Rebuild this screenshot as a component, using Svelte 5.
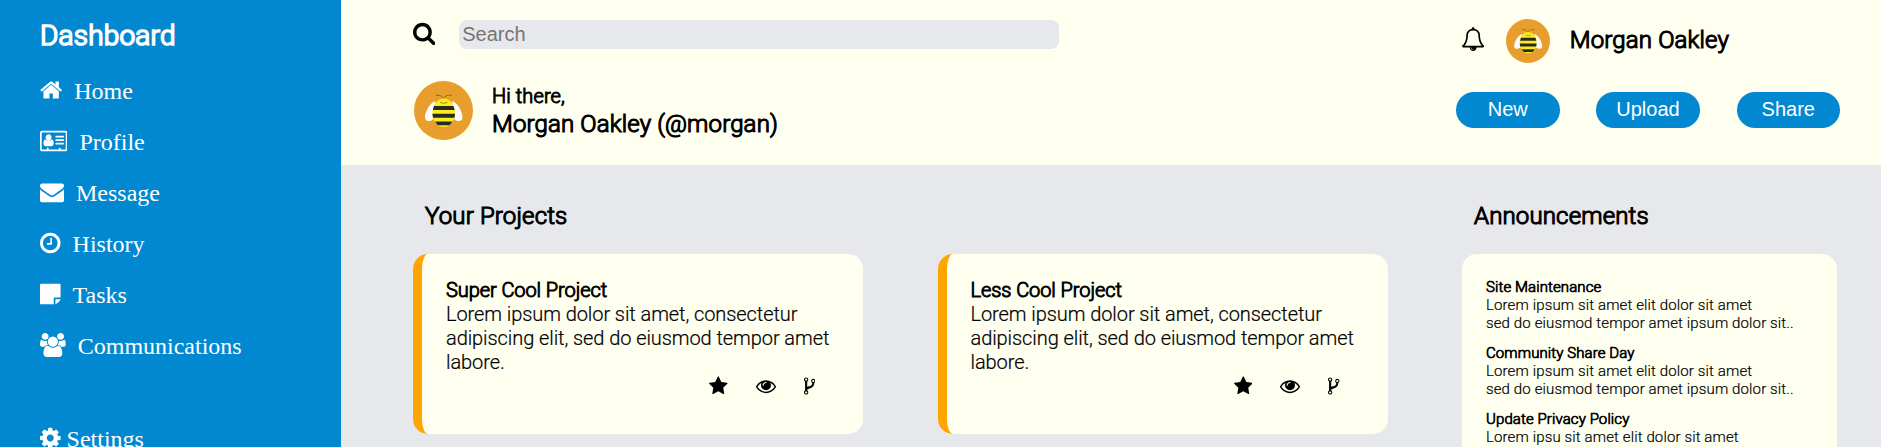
<script>
  const icons = {
    home: { box: '64 0 1664 1792', d: 'M1472 992v480q0 26-19 45t-45 19h-384v-384h-256v384h-384q-26 0-45-19t-19-45v-480q0-1 .5-3t.5-3l575-474 575 474q1 2 1 6zm223-69l-62 74q-8 9-21 11h-3q-13 0-21-7l-692-577-692 577q-12 8-24 7-13-2-21-11l-62-74q-8-10-7-23.5t11-21.5l719-599q32-26 76-26t76 26l244 204v-195q0-14 9-23t23-9h192q14 0 23 9t9 23v408l219 182q10 8 11 21.5t-7 23.5z' },
    card: { box: '0 0 2048 1792', d: 'M160 128h1728q66 0 113 47t47 113v1216q0 66-47 113t-113 47h-1728q-66 0-113-47t-47-113v-1216q0-66 47-113t113-47zM160 256q-32 0-32 32v1216q0 32 32 32h352v-96q0-14 9-23t23-9h64q14 0 23 9t9 23v96h768v-96q0-14 9-23t23-9h64q14 0 23 9t9 23v96h352q32 0 32-32v-1216q0-32-32-32zM867 625q0 94-66 160.500t-160 66.500-160-66.500-66-160.500 66-160 160-66 160 66 66 160zM1024 1035q0 104-44 174t-132 70h-416q-88 0-132-70t-44-174q0-110 37-185t128-75q94 88 219 88t219-88q91 0 128 75t37 185zM1184 512h576q32 0 32 32v64q0 32-32 32h-576q-32 0-32-32v-64q0-32 32-32zM1184 768h576q32 0 32 32v64q0 32-32 32h-576q-32 0-32-32v-64q0-32 32-32zM1184 1024h576q32 0 32 32v64q0 32-32 32h-576q-32 0-32-32v-64q0-32 32-32z' },
    envelope: { box: '0 0 1792 1792', d: 'M1792 710v794q0 66-47 113t-113 47h-1472q-66 0-113-47t-47-113v-794q44 49 101 87 362 246 497 345 57 42 92.5 65.5t94.5 48 110 24.5h2q51 0 110-24.5t94.5-48 92.5-65.5q170-123 498-345 57-39 100-87zm0-294q0 79-49 151t-122 123q-376 261-468 325-10 7-42.5 31t-54 38.5-52 32.5-57.5 27-50 9h-2q-23 0-50-9t-57.5-27-52-32.5-54-38.5-42.5-31q-91-64-262-182.5t-205-142.5q-62-42-117-115.5t-55-136.5q0-78 41.5-130t118.5-52h1472q65 0 112.5 47t47.5 113z' },
    clock: { box: '128 0 1536 1792', d: 'M1024 544v448q0 14-9 23t-23 9h-320q-14 0-23-9t-9-23v-64q0-14 9-23t23-9h224v-352q0-14 9-23t23-9h64q14 0 23 9t9 23zm416 352q0-148-73-273t-198-198-273-73-273 73-198 198-73 273 73 273 198 198 273 73 273-73 198-198 73-273zm224 0q0 209-103 385.5t-279.5 279.5-385.5 103-385.5-103-279.5-279.5-103-385.5 103-385.5 279.5-279.5 385.5-103 385.5 103 279.5 279.5 103 385.5z' },
    note: { box: '128 0 1536 1792', d: 'M1152 1248v416h-928q-40 0-68-28t-28-68v-1344q0-40 28-68t68-28h1344q40 0 68 28t28 68v928h-416q-40 0-68 28t-28 68zm128 32h381q-15 82-65 132l-184 184q-50 50-132 65z' },
    group: { box: '0 0 1920 1792', d: 'M593 896q-162 5-265 128h-134q-82 0-138-40.5t-56-118.5q0-353 124-353 6 0 43.5 21t97.5 42.5 119 21.5q67 0 133-23-5 37-5 66 0 139 81 256zm1071 637q0 120-73 189.5t-194 69.5h-874q-121 0-194-69.5t-73-189.5q0-53 3.5-103.5t14-109 26.5-108.5 43-97.5 62-81 85.5-53.5 111.5-20q10 0 43 21.5t73 48 107 48 135 21.5 135-21.5 107-48 73-48 43-21.5q61 0 111.5 20t85.5 53.5 62 81 43 97.5 26.5 108.5 14 109 3.5 103.5zm-1024-1277q0 106-75 181t-181 75-181-75-75-181 75-181 181-75 181 75 75 181zm704 384q0 159-112.5 271.5t-271.5 112.5-271.5-112.5-112.5-271.5 112.5-271.5 271.5-112.5 271.5 112.5 112.5 271.5zm576 225q0 78-56 118.5t-138 40.5h-134q-103-123-265-128 81-117 81-256 0-29-5-66 66 23 133 23 59 0 119-21.5t97.5-42.5 43.5-21q124 0 124 353zm-128-609q0 106-75 181t-181 75-181-75-75-181 75-181 181-75 181 75 75 181z' },
    cog: { box: '128 0 1536 1792', d: 'M1152 896q0-106-75-181t-181-75-181 75-75 181 75 181 181 75 181-75 75-181zm512-109v222q0 12-8 23t-20 13l-185 28q-19 54-39 91 35 50 107 138 10 12 10 25t-9 23q-27 37-99 108t-94 71q-12 0-26-9l-138-108q-44 23-91 38-16 136-29 186-7 28-36 28h-222q-14 0-24.5-8.5t-11.5-21.5l-28-184q-49-16-90-37l-141 107q-10 9-25 9-14 0-25-11-126-114-165-168-7-10-7-23 0-12 8-23 15-21 51-66.5t54-70.5q-27-50-41-99l-183-27q-13-2-21-12.5t-8-23.5v-222q0-12 8-23t19-13l186-28q14-46 39-92-40-57-107-138-10-12-10-24 0-10 9-23 26-36 98.5-107.5t94.5-71.5q13 0 26 10l138 107q44-23 91-38 16-136 29-186 7-28 36-28h222q14 0 24.5 8.5t11.5 21.5l28 184q49 16 90 37l142-107q9-9 24-9 13 0 25 10 129 119 165 170 7 8 7 22 0 12-8 23-15 21-51 66.5t-54 70.5q26 50 41 98l183 28q13 2 21 12.5t8 23.5z' },
    search: { box: '64 0 1664 1792', d: 'M1216 832q0-185-131.5-316.5t-316.5-131.5-316.5 131.5-131.5 316.5 131.5 316.5 316.5 131.5 316.5-131.5 131.5-316.5zm512 832q0 52-38 90t-90 38q-54 0-90-38l-343-342q-179 124-399 124-143 0-273.5-55.5t-225-150-150-225-55.5-273.5 55.5-273.5 150-225 225-150 273.5-55.5 273.5 55.5 225 150 150 225 55.5 273.5q0 220-124 399l343 343q37 37 37 90z' },
    bell: { box: '64 0 1664 1792', d: 'M912 1696q0-16-16-16-59 0-101.5-42.5t-42.5-101.5q0-16-16-16t-16 16q0 73 51.5 124.5t124.5 51.5q16 0 16-16zm-666-288h1300q-266-300-266-832 0-51-24-105t-69-103-121.5-80.5-169.5-31.5-169.5 31.5-121.5 80.5-69 103-24 105q0 532-266 832zm1482 0q0 52-38 90t-90 38h-448q0 106-75 181t-181 75-181-75-75-181h-448q-52 0-90-38t-38-90q50-42 91-88t85-119.5 74.5-158.5 50-206 19.5-260q0-152 117-282.5t307-158.500q-8-19-8-39 0-40 28-68t68-28 68 28 28 68q0 20-8 39 190 28 307 158.5t117 282.5q0 139 19.5 260t50 206 74.5 158.5 85 119.5 91 88z' },
    star: { box: '64 0 1664 1792', d: 'M1728 647q0 22-26 48l-363 354 86 500q1 7 1 20 0 21-10.5 35.5t-30.5 14.5q-19 0-40-12l-449-236-449 236q-22 12-40 12-21 0-31.5-14.5t-10.5-35.5q0-6 2-20l86-500-364-354q-25-27-25-48 0-37 56-46l502-73 225-455q19-41 49-41t49 41l225 455 502 73q56 9 56 46z' },
    eye: { box: '0 0 1792 1792', d: 'M1664 960q-152-236-381-353 61 104 61 225 0 185-131.5 316.5t-316.5 131.5-316.5-131.5-131.5-316.5q0-121 61-225-229 117-381 353 133 205 333.5 326.5t434.5 121.5 434.5-121.5 333.5-326.5zm-720-384q0-20-14-34t-34-14q-125 0-214.5 89.5t-89.5 214.5q0 20 14 34t34 14 34-14 14-34q0-86 61-147t147-61q20 0 34-14t14-34zm848 384q0 34-20 69-140 230-376.5 368.5t-499.5 138.5-499.5-139-376.5-368q-20-35-20-69t20-69q140-229 376.5-368t499.5-139 499.5 139 376.5 368q20 35 20 69z' },
    fork: { box: '384 0 1024 1792', d: 'M672 1472q0-40-28-68t-68-28-68 28-28 68 28 68 68 28 68-28 28-68zm0-1152q0-40-28-68t-68-28-68 28-28 68 28 68 68 28 68-28 28-68zm640 128q0-40-28-68t-68-28-68 28-28 68 28 68 68 28 68-28 28-68zm96 0q0 52-26 96.5t-70 69.5q-2 287-226 414-67 38-203 81-128 40-169.5 71t-41.5 100v26q44 25 70 69.5t26 96.5q0 80-56 136t-136 56-136-56-56-136q0-52 26-96.5t70-69.5v-820q-44-25-70-69.5t-26-96.5q0-80 56-136t136-56 136 56 56 136q0 52-26 96.5t-70 69.5v497q54-26 154-57 55-17 87.5-29.5t70.5-31 59-39.5 40.5-51 28-69.5 8.5-91.5q-44-25-70-69.5t-26-96.5q0-80 56-136t136-56 136 56 56 136z' }
  };

  const nav = [
    ['home', 'Home'],
    ['card', 'Profile'],
    ['envelope', 'Message'],
    ['clock', 'History'],
    ['note', 'Tasks'],
    ['group', 'Communications']
  ];
  const actions = ['New', 'Upload', 'Share'];
  const projects = ['Super Cool Project', 'Less Cool Project'];
  const news = [
    ['Site Maintenance', 'Lorem ipsum sit amet elit dolor sit amet'],
    ['Community Share Day', 'Lorem ipsum sit amet elit dolor sit amet'],
    ['Update Privacy Policy', 'Lorem ipsu sit amet elit dolor sit amet']
  ];
</script>

{#snippet icon(name)}
  <svg class="icon" viewBox={icons[name].box} fill="currentColor" aria-hidden="true">
    <path fill-rule={name === 'card' ? 'evenodd' : 'nonzero'} d={icons[name].d} />
  </svg>
{/snippet}

{#snippet bee()}
  <svg class="bee" viewBox="0 0 59 59" aria-hidden="true">
    <circle cx="29.5" cy="29.5" r="29.5" fill="#e79e2d" />
    <path d="M23.500 14.200q3 -.5 6 3q3-3.500 6-3" fill="none" stroke="#7a501c" stroke-width=".7" />
    <circle cx="22.900" cy="14.300" r=".8" fill="#7a501c" />
    <circle cx="36.900" cy="14.300" r=".8" fill="#7a501c" />
    <path d="M21 20C15 23 11 31 11 36.500C11 40.500 15.500 41 19 38.500L22 33zM38.500 20C44.500 23 48.500 31 48.500 36.500C48.500 40.500 44 41 40.500 38.500L37.500 33z" fill="#fbfafa" />
    <path d="M29.700 17.500C36.500 17.500 41 24 41 32C41 40 36.500 46 29.700 46C23 46 18.500 40 18.500 32C18.500 24 23 17.500 29.700 17.500z" fill="#fbec1f" />
    <path d="M20.100 25h19.300q.9 2 1.200 4h-21.700q.3-2 1.200-4zM18.500 32.800h22.500q0 2-.6 4h-21.300q-.6-2-.6-4zM21 40.600h17.500q-1.200 2.200-3 3.600h-11.500q-1.800-1.400-3-3.600z" fill="#292a24" />
    <path d="M26 21.300q3.700 2.400 7.400 0" fill="none" stroke="#8d7b1a" stroke-width=".8" />
  </svg>
{/snippet}

<div class="page">
  <aside>
    <h1>Dashboard</h1>
    <nav>
      {#each nav as [name, label]}
        <a href="#top">{@render icon(name)}<span>{label}</span></a>
      {/each}
      <a class="settings" href="#top">{@render icon('cog')}<span>Settings</span></a>
    </nav>
  </aside>

  <div class="content">
    <header>
      <div class="left">
        <div class="search">
          {@render icon('search')}
          <input type="text" placeholder="Search" />
        </div>
        <div class="greeting">
          {@render bee()}
          <div>
            <p class="hi">Hi there,</p>
            <h2>Morgan Oakley (@morgan)</h2>
          </div>
        </div>
      </div>
      <div class="right">
        <div class="user">
          {@render icon('bell')}
          {@render bee()}
          <h2>Morgan Oakley</h2>
        </div>
        <div class="actions">
          {#each actions as action}
            <button>{action}</button>
          {/each}
        </div>
      </div>
    </header>

    <main>
      <section class="projects">
        <h2>Your Projects</h2>
        <div class="cards">
          {#each projects as project}
            <article>
              <h3>{project}</h3>
              <p>Lorem ipsum dolor sit amet, consectetur<br />adipiscing elit, sed do eiusmod tempor amet<br />labore.</p>
              <div class="tools">
                {@render icon('star')}
                {@render icon('eye')}
                {@render icon('fork')}
              </div>
            </article>
          {/each}
        </div>
      </section>
      <section class="announcements">
        <h2>Announcements</h2>
        <div class="panel">
          {#each news as [title, line]}
            <div>
              <h4>{title}</h4>
              <p>{line}<br />sed do eiusmod tempor amet ipsum dolor sit..</p>
            </div>
          {/each}
        </div>
      </section>
    </main>
  </div>
</div>

<style>
  :global(body) {
    margin: 0;
    overflow: hidden;
  }
  * {
    box-sizing: border-box;
  }
  .page {
    display: grid;
    grid-template-columns: 341px 1fr;
    height: 447px;
    overflow: hidden;
    font-family: Roboto, sans-serif;
    font-weight: 300;
    color: #000;
    background: #e7e8eb;
  }
  h1, h2, h3, h4, p {
    margin: 0;
    font-weight: 300;
    white-space: nowrap;
  }
  p {
    -webkit-text-stroke: 0.2px currentColor;
  }
  h1, h2, h3, h4, .hi {
    -webkit-text-stroke: 0.048em currentColor;
  }
  h2 {
    font-size: 24px;
    line-height: 28px;
    letter-spacing: 0.15px;
  }
  .icon, .bee {
    display: block;
    flex: none;
  }
  .icon {
    height: 24px;
    width: auto;
  }
  aside {
    padding: 20px 40px 0;
    background: #0288d1;
    color: #fff;
    height: 447px;
    overflow: hidden;
  }
  h1 {
    font-size: 28px;
    line-height: 32px;
    letter-spacing: 0.2px;
    -webkit-text-stroke-width: 0.06em;
  }
  nav {
    display: flex;
    flex-direction: column;
    gap: 23px;
    margin-top: 25px;
    font: 24px/28px 'Liberation Serif', serif;
  }
  nav a {
    display: flex;
    gap: 12px;
    color: inherit;
    text-decoration: none;
  }
  nav .icon {
    margin-top: 1.400px;
  }
  nav .settings {
    gap: 6px;
    margin-top: 42px;
  }
  .content {
    display: flex;
    flex-direction: column;
    height: 447px;
    overflow: hidden;
  }
  header {
    display: flex;
    flex: none;
    justify-content: space-between;
    height: 165px;
    padding: 0 41px 0 72px;
    background: #fffff0;
  }
  .search {
    display: flex;
    gap: 24px;
    padding-top: 20px;
  }
  .search .icon {
    margin-top: 0.600px;
  }
  input {
    width: 600px;
    height: 29px;
    padding: 1px 3px;
    border: 0;
    border-radius: 8px;
    background: #e7e8eb;
    font: 20px 'Liberation Sans', sans-serif;
  }
  input::placeholder {
    color: #757575;
  }
  .greeting {
    display: flex;
    gap: 19px;
    padding: 32px 0 0 1px;
  }
  .greeting .bee {
    width: 59px;
    height: 59px;
  }
  .hi {
    margin: 3px 0 2px;
    font-size: 20px;
    line-height: 24px;
    letter-spacing: 0.1px;
  }
  .right {
    width: 384px;
  }
  .user {
    display: flex;
    align-items: flex-start;
    padding: 18.500px 0 0 6px;
  }
  .user .icon {
    margin: 8.500px 21.500px 0 0;
  }
  .user .bee {
    width: 44px;
    height: 44px;
  }
  .user h2 {
    margin: 7.500px 0 0 20px;
  }
  .actions {
    display: flex;
    justify-content: space-between;
    padding-top: 29.500px;
  }
  button {
    width: 103.500px;
    height: 36px;
    padding: 0 0 2px;
    border: 0;
    border-radius: 20px;
    background: #0288d1;
    color: #fff;
    font: 20px 'Liberation Sans', sans-serif;
  }
  main {
    display: flex;
    justify-content: space-between;
    padding: 37px 44px 0 72px;
  }
  main h2 {
    margin-bottom: 24px;
    padding-left: 12px;
  }
  .cards {
    display: flex;
    gap: 74.500px;
  }
  article {
    width: 450px;
    height: 180px;
    padding: 24px;
    border-left: 9px solid orange;
    border-radius: 15px;
    background: #fffff0;
    font-size: 20px;
    line-height: 24px;
    letter-spacing: -0.075px;
  }
  h3 {
    font-size: 20px;
  }
  .tools {
    display: flex;
    justify-content: flex-end;
    gap: 28px;
    padding: 2px 24px 0 0;
  }
  .tools .icon {
    height: 20px;
  }
  .panel {
    display: flex;
    flex-direction: column;
    gap: 12px;
    width: 375px;
    height: 240px;
    padding: 24px;
    border-radius: 15px;
    background: #fffff0;
    font-size: 15px;
    line-height: 18px;
    letter-spacing: 0.13px;
  }
  h4 {
    font-size: 15px;
    letter-spacing: 0.1px;
  }
</style>
